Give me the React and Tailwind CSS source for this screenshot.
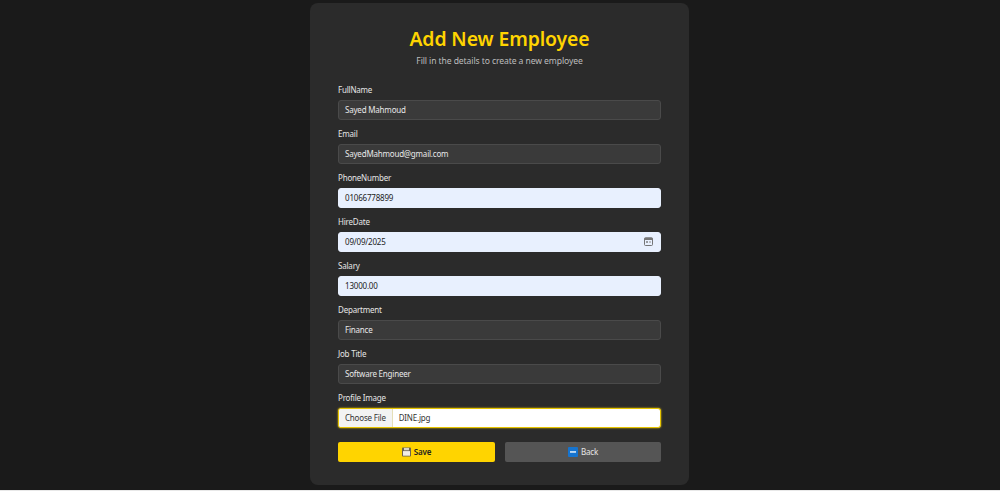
const font = { fontFamily: '"Noto Sans", "Open Sans", sans-serif' };

function Field({ label, value, variant = "dark", children }) {
  const styles =
    variant === "dark"
      ? "h-[20px] bg-[#3a3a3a] border-[#4a4a4a] text-[#e8e8e8]"
      : "h-[19.5px] bg-[#e8f0fe] border-[#e8f0fe] text-[#222222]";
  return (
    <div className="flex flex-col h-[40px]">
      <label className="h-[20px] text-[8px] tracking-[-0.2px] leading-[20px] text-[#e6e6e6]">{label}</label>
      <div className={`flex items-center justify-between rounded-[3px] border px-[6px] text-[8px] tracking-[-0.2px] ${styles}`}>
        <span>{value}</span>
        {children}
      </div>
    </div>
  );
}

function CalendarIcon() {
  return (
    <svg width="9" height="9" viewBox="0 0 9 9" className="mr-[1px]">
      <rect x="0.5" y="0.8" width="8" height="7.7" rx="1" fill="none" stroke="#666" strokeWidth="0.9" />
      <rect x="0.5" y="0.8" width="8" height="2.2" fill="#777" />
      <rect x="2" y="4.3" width="2" height="1.4" fill="#777" />
      <rect x="5" y="4.3" width="2" height="1.4" fill="#aaa" />
    </svg>
  );
}

function SaveIcon() {
  return (
    <svg width="9" height="10" viewBox="0 0 9 10">
      <rect x="0" y="0.5" width="9" height="9" rx="0.8" fill="#6b6250" />
      <rect x="1" y="4.1" width="7" height="4.6" fill="#f1ede2" />
      <rect x="2" y="0.9" width="5" height="2.4" fill="#d8d4c8" />
    </svg>
  );
}

function BackIcon() {
  return (
    <svg width="10" height="10" viewBox="0 0 10 10">
      <rect width="10" height="10" rx="1" fill="#1674cf" />
      <rect x="2" y="4.2" width="6" height="1.5" fill="#e8f2fb" />
    </svg>
  );
}

export default function App() {
  return (
    <div style={font} className="h-[491px] w-[1000px] flex flex-col overflow-hidden">
      <main className="h-[490px] bg-[#1a1a1a] flex justify-center pt-[3px] pr-[1px]">
        <section className="w-[379px] h-[482px] bg-[#2b2b2b] rounded-[8px] px-[28px] pt-[22px] flex flex-col">
          <h1 className="text-center text-[19.4px] tracking-[-0.1px] leading-[28px] font-semibold text-[#ffd400]">Add New Employee</h1>
          <p className="text-center text-[8.6px] tracking-[-0.1px] leading-[14px] mt-[1px] text-[#bdbdbd]">Fill in the details to create a new employee</p>
          <div className="flex flex-col gap-[4px] mt-[12px]">
            <Field label="FullName" value="Sayed Mahmoud" />
            <Field label="Email" value="SayedMahmoud@gmail.com" />
            <Field label="PhoneNumber" value="01066778899" variant="light" />
            <Field label="HireDate" value="09/09/2025" variant="light"><CalendarIcon /></Field>
            <Field label="Salary" value="13000.00" variant="light" />
            <Field label="Department" value="Finance" />
            <Field label="Job Title" value="Software Engineer" />
            <div className="flex flex-col">
              <label className="h-[20px] text-[8px] tracking-[-0.2px] leading-[20px] text-[#e6e6e6]">Profile Image</label>
              <div className="flex items-center h-[20px] bg-white rounded-[3px] border border-[#e6c400] shadow-[0_0_2px_#ffd400] text-[8px] tracking-[-0.2px] text-[#333333] overflow-hidden">
                <span className="h-full flex items-center px-[6px] bg-[#f3f3f3] border-r border-[#e5dfb8]">Choose File</span>
                <span className="pl-[6px]">DINE.jpg</span>
              </div>
            </div>
          </div>
          <div className="flex gap-[10px] mt-[14px]">
            <button className="w-[157px] h-[20px] flex items-center justify-center gap-[3px] bg-[#ffd400] rounded-[2px] text-[8px] tracking-[-0.2px] font-semibold text-[#222222]">
              <SaveIcon />Save
            </button>
            <button className="w-[156px] h-[20px] flex items-center justify-center gap-[3px] bg-[#555555] rounded-[2px] text-[8px] tracking-[-0.2px] text-[#e6e6e6]">
              <BackIcon />Back
            </button>
          </div>
        </section>
      </main>
      <div className="h-[1px] bg-[#e8e8e8]" />
    </div>
  );
}
